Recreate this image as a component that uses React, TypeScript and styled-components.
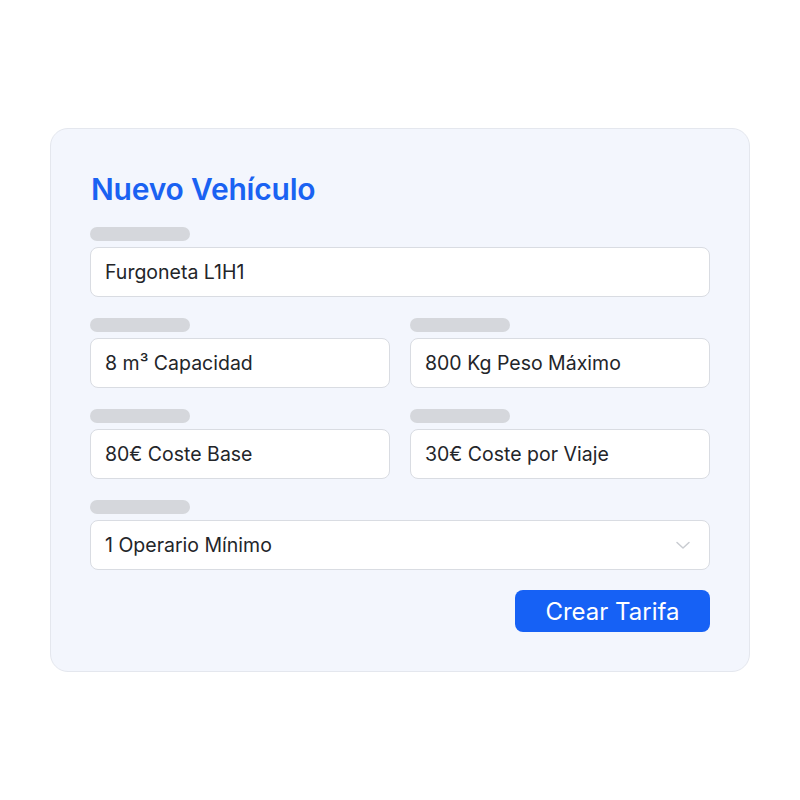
import React from 'react';
import styled, { createGlobalStyle } from 'styled-components';

const GlobalStyle = createGlobalStyle`
  html, body {
    margin: 0;
    padding: 0;
    background: #ffffff;
    font-family: Inter, "Noto Sans", sans-serif;
  }
`;

const App = () => {
  return (
    <Page>
      <GlobalStyle />
      <Card>
        <Title>Nuevo Vehículo</Title>
        <Form>
          <Field>
            <LabelBar />
            <Input>Furgoneta L1H1</Input>
          </Field>
          <Row>
            <Field>
              <LabelBar />
              <Input>8 m³ Capacidad</Input>
            </Field>
            <Field>
              <LabelBar />
              <Input>800 Kg Peso Máximo</Input>
            </Field>
          </Row>
          <Row>
            <Field>
              <LabelBar />
              <Input>80€ Coste Base</Input>
            </Field>
            <Field>
              <LabelBar />
              <Input>30€ Coste por Viaje</Input>
            </Field>
          </Row>
          <Field>
            <LabelBar />
            <Select>
              <span>1 Operario Mínimo</span>
              <svg width="16" height="16" viewBox="0 0 16 16" fill="none">
                <path d="M2 5.5 L8 11 L14 5.5" stroke="#c9ccd1" strokeWidth="1.5" strokeLinecap="round" strokeLinejoin="round" />
              </svg>
            </Select>
          </Field>
        </Form>
        <Actions>
          <Button>Crear Tarifa</Button>
        </Actions>
      </Card>
    </Page>
  );
};

export default App;

const Page = styled.div`
  width: 800px;
  height: 800px;
  display: flex;
  align-items: center;
  justify-content: center;
  box-sizing: border-box;
`;

const Card = styled.div`
  width: 700px;
  box-sizing: border-box;
  padding: 41px 39px 39px;
  background: #f3f6fd;
  border: 1px solid #e4e7ee;
  border-radius: 18px;
`;

const Title = styled.h1`
  margin: 0 0 0 1px;
  font-size: 30px;
  line-height: 38px;
  font-weight: 600;
  color: #1a62f2;
  letter-spacing: -0.2px;
`;

const Form = styled.div`
  margin-top: 19px;
  display: flex;
  flex-direction: column;
  gap: 21px;
`;

const Row = styled.div`
  display: grid;
  grid-template-columns: 1fr 1fr;
  gap: 20px;
`;

const Field = styled.div`
  display: flex;
  flex-direction: column;
  gap: 6px;
`;

const LabelBar = styled.div`
  width: 100px;
  height: 14px;
  border-radius: 7px;
  background: #d5d7dc;
`;

const Input = styled.div`
  height: 50px;
  box-sizing: border-box;
  display: flex;
  align-items: center;
  padding: 0 14px;
  background: #ffffff;
  border: 1px solid #d9dce2;
  border-radius: 8px;
  font-size: 19.5px;
  font-weight: 400;
  color: #232529;
`;

const Select = styled(Input)`
  justify-content: space-between;
  padding-right: 18px;
`;

const Actions = styled.div`
  margin-top: 20px;
  display: flex;
  justify-content: flex-end;
`;

const Button = styled.button`
  width: 195px;
  height: 42px;
  border: none;
  border-radius: 8px;
  background: #1661f5;
  color: #ffffff;
  font-family: Inter, "Noto Sans", sans-serif;
  font-size: 24px;
  font-weight: 400;
  cursor: pointer;
`;
